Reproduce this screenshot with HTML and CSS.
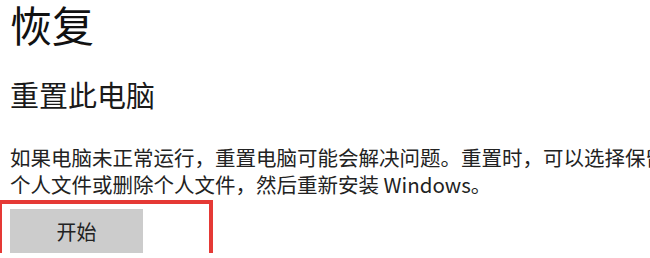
FILE: index.html
```html
<!DOCTYPE html>
<html lang="zh-CN">
<head>
    <meta charset="UTF-8">
    <meta name="viewport" content="width=device-width, initial-scale=1.0">
    <title>恢复</title>
    <link rel="stylesheet" href="styles.css">
</head>
<body>
    <div class="page">
        <h1 class="title">恢复</h1>
        <h2 class="subtitle">重置此电脑</h2>
        <p class="desc">如果电脑未正常运行，重置电脑可能会解决问题。重置时，可以选择保留<br>个人文件或删除个人文件，然后重新安装 Windows。</p>
        <div class="action">
            <button class="start-btn">开始</button>
            <div class="highlight"></div>
        </div>
    </div>
</body>
</html>
```

FILE: styles.css
```css
html, body {
    margin: 0;
    padding: 0;
    background: #fff;
    overflow: hidden;
}

body {
    font-family: "Noto Sans CJK SC", "Noto Sans", sans-serif;
    color: #1b1b1b;
}

.page {
    padding-left: 10px;
}

.title {
    font-size: 42px;
    font-weight: normal;
    line-height: 52px;
    margin: -2px 0 0;
    color: #111;
}

.subtitle {
    font-size: 29px;
    font-weight: normal;
    line-height: 40px;
    margin: 24px 0 0;
    color: #1a1a1a;
}

.desc {
    font-size: 20.5px;
    line-height: 27px;
    margin: 30px 0 0;
    white-space: nowrap;
    color: #222;
}

.action {
    position: relative;
    margin-top: 11px;
}

.start-btn {
    display: block;
    width: 133px;
    height: 44px;
    border: none;
    background: #cccccc;
    font-family: "Noto Sans CJK SC", sans-serif;
    font-size: 20px;
    color: #222;
    padding: 0;
}

/* red annotation frame around the button, open past the bottom edge */
.highlight {
    position: absolute;
    left: -12px;
    top: -9px;
    width: 207px;
    height: 54px;
    border: 4px solid #e53935;
}
```
